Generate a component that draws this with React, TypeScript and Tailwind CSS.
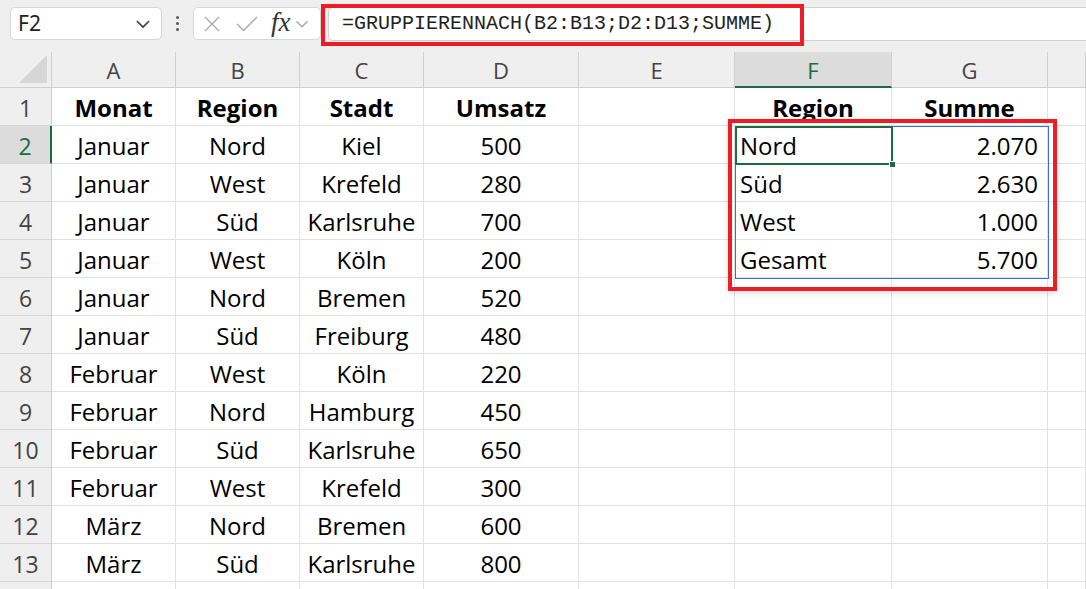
import React from "react";

const cols = ["A", "B", "C", "D", "E", "F", "G", ""];
const widths = [124, 124, 124, 155, 156, 157, 156, 38];

type Row = { a: string; b: string; c: string; d: string; f?: string; g?: string };
const rows: Row[] = [
  { a: "Monat", b: "Region", c: "Stadt", d: "Umsatz", f: "Region", g: "Summe" },
  { a: "Januar", b: "Nord", c: "Kiel", d: "500", f: "Nord", g: "2.070" },
  { a: "Januar", b: "West", c: "Krefeld", d: "280", f: "Süd", g: "2.630" },
  { a: "Januar", b: "Süd", c: "Karlsruhe", d: "700", f: "West", g: "1.000" },
  { a: "Januar", b: "West", c: "Köln", d: "200", f: "Gesamt", g: "5.700" },
  { a: "Januar", b: "Nord", c: "Bremen", d: "520" },
  { a: "Januar", b: "Süd", c: "Freiburg", d: "480" },
  { a: "Februar", b: "West", c: "Köln", d: "220" },
  { a: "Februar", b: "Nord", c: "Hamburg", d: "450" },
  { a: "Februar", b: "Süd", c: "Karlsruhe", d: "650" },
  { a: "Februar", b: "West", c: "Krefeld", d: "300" },
  { a: "März", b: "Nord", c: "Bremen", d: "600" },
  { a: "März", b: "Süd", c: "Karlsruhe", d: "800" },
];

const font = { fontFamily: '"Open Sans", "Noto Sans", sans-serif' };

function Chevron({ className }: { className?: string }) {
  return (
    <svg viewBox="0 0 16 16" className={className} fill="none" stroke="currentColor" strokeWidth="1.4" strokeLinecap="round" strokeLinejoin="round">
      <path d="M3.5 6 L8 10.5 L12.5 6" />
    </svg>
  );
}

export default function App() {
  return (
    <div className="w-[1086px] h-[589px] overflow-hidden bg-[#efefef] relative" style={font}>
      {/* Top bar */}
      <div className="h-[52px] flex items-start pt-[7px]">
        <div className="ml-[10px] w-[152px] h-[33px] bg-white border border-[#d6d6d6] rounded-[5px] flex items-center justify-between pl-[7px] pr-[8px]">
          <span className="text-[21px] text-[#222] leading-none" style={{ fontFamily: '"Noto Sans", sans-serif' }}>F2</span>
          <Chevron className="w-[20px] h-[20px] text-[#444]" />
        </div>
        <div className="w-[31px] h-[33px] flex flex-col items-center justify-center gap-[3px]">
          <div className="w-[3px] h-[3px] bg-[#555] rounded-full" />
          <div className="w-[3px] h-[3px] bg-[#555] rounded-full" />
          <div className="w-[3px] h-[3px] bg-[#555] rounded-full" />
        </div>
        <div className="w-[128px] h-[33px] bg-white border border-[#d6d6d6] rounded-[5px] flex items-center pl-[8px]">
          <svg viewBox="0 0 20 20" className="w-[20px] h-[20px] text-[#a8a8a8]" fill="none" stroke="currentColor" strokeWidth="1.3">
            <path d="M3 3 L17 17 M17 3 L3 17" />
          </svg>
          <svg viewBox="0 0 24 20" className="w-[24px] h-[20px] ml-[13px] text-[#a8a8a8]" fill="none" stroke="currentColor" strokeWidth="1.3">
            <path d="M2 10 L8.5 16.5 L22 3" />
          </svg>
          <span className="ml-[12px] text-[27px] italic text-[#333] leading-none -mt-[3px]" style={{ fontFamily: '"Liberation Serif", serif' }}>fx</span>
          <Chevron className="ml-[2px] w-[18px] h-[18px] text-[#aaa]" />
        </div>
        <div className="ml-[7px] flex-1 h-[34px] bg-white border-y border-l border-[#d0d0d0] rounded-l-[5px] flex items-center pl-[13px]">
          <span className="text-[20px] text-[#222] leading-none" style={{ fontFamily: '"Liberation Mono", monospace' }}>
            =GRUPPIERENNACH(B2:B13;D2:D13;SUMME)
          </span>
        </div>
      </div>

      {/* Grid */}
      <div className="bg-white">
        {/* header row */}
        <div className="flex h-[36px] bg-[#efefef]">
          <div className="w-[52px] h-[36px] border-r border-b border-[#cfcfcf] flex items-end justify-end pr-[3px] pb-[3px]">
            <svg viewBox="0 0 30 30" className="w-[30px] h-[30px]">
              <path d="M29 1 L29 29 L1 29 Z" fill="#d6d6d6" />
            </svg>
          </div>
          {cols.map((c, i) => (
            <div
              key={i}
              style={{ width: widths[i] }}
              className={`h-[36px] shrink-0 flex items-center justify-center text-[22px] pt-[2px] border-r ${
                c === "F"
                  ? "bg-[#dcdcdc] text-[#1e6b41] border-b-2 border-b-[#1e6b41] border-r-[#cfcfcf]"
                  : "text-[#444] border-b border-[#cfcfcf]"
              }`}
            >
              {c}
            </div>
          ))}
        </div>
        {rows.map((r, ri) => {
          const bold = ri === 0;
          const sel = ri === 1;
          const cellBase = "h-[38px] shrink-0 flex items-center pt-[3px] border-r border-b border-[#e1e1e1] text-[24px] text-black whitespace-nowrap";
          return (
            <div key={ri} className="flex h-[38px]">
              <div
                className={`w-[52px] h-[38px] shrink-0 flex items-center justify-center pt-[3px] text-[23px] border-b border-[#d6d6d6] ${
                  sel ? "bg-[#dcdcdc] text-[#1e6b41] border-r-2 border-r-[#1e6b41]" : "bg-[#efefef] text-[#444] border-r border-r-[#cfcfcf]"
                }`}
              >
                {ri + 1}
              </div>
              {[r.a, r.b, r.c, r.d].map((v, ci) => (
                <div key={ci} style={{ width: widths[ci] }} className={`${cellBase} justify-center ${bold ? "font-bold" : ""}`}>
                  {v}
                </div>
              ))}
              <div style={{ width: widths[4] }} className={cellBase} />
              <div
                style={{ width: widths[5] }}
                className={`${cellBase} ${bold ? "justify-center font-bold" : "justify-start pl-[5px]"}`}
              >
                {r.f ?? ""}
              </div>
              <div
                style={{ width: widths[6] }}
                className={`${cellBase} ${bold ? "justify-center font-bold" : "justify-end pr-[9px]"}`}
              >
                {r.g ?? ""}
              </div>
              <div style={{ width: widths[7] }} className={cellBase} />
            </div>
          );
        })}
        <div className="flex h-[10px]">
          <div className="w-[52px] h-[10px] bg-[#efefef] border-r border-[#cfcfcf]" />
          {widths.map((w, i) => (
            <div key={i} style={{ width: w }} className="h-[10px] shrink-0 border-r border-[#e1e1e1]" />
          ))}
        </div>
      </div>

      {/* Spill range border (blue) */}
      <div className="absolute left-[735px] top-[126px] w-[314px] h-[153px] border border-[#3a6fd0] pointer-events-none" />
      {/* Active cell (green) */}
      <div className="absolute left-[735px] top-[126px] w-[158px] h-[39px] border-2 border-[#1e6b41] pointer-events-none" />
      <div className="absolute left-[889px] top-[161px] w-[7px] h-[7px] bg-[#1e6b41] border border-white pointer-events-none" />

      {/* Red annotation boxes */}
      <div className="absolute left-[321px] top-[4px] w-[483px] h-[42px] border-[4px] border-[#ee1c25] pointer-events-none" />
      <div className="absolute left-[728px] top-[119px] w-[329px] h-[172px] border-[4px] border-[#ee1c25] pointer-events-none shadow-[0_2px_6px_rgba(0,0,0,0.15)]" />
    </div>
  );
}
